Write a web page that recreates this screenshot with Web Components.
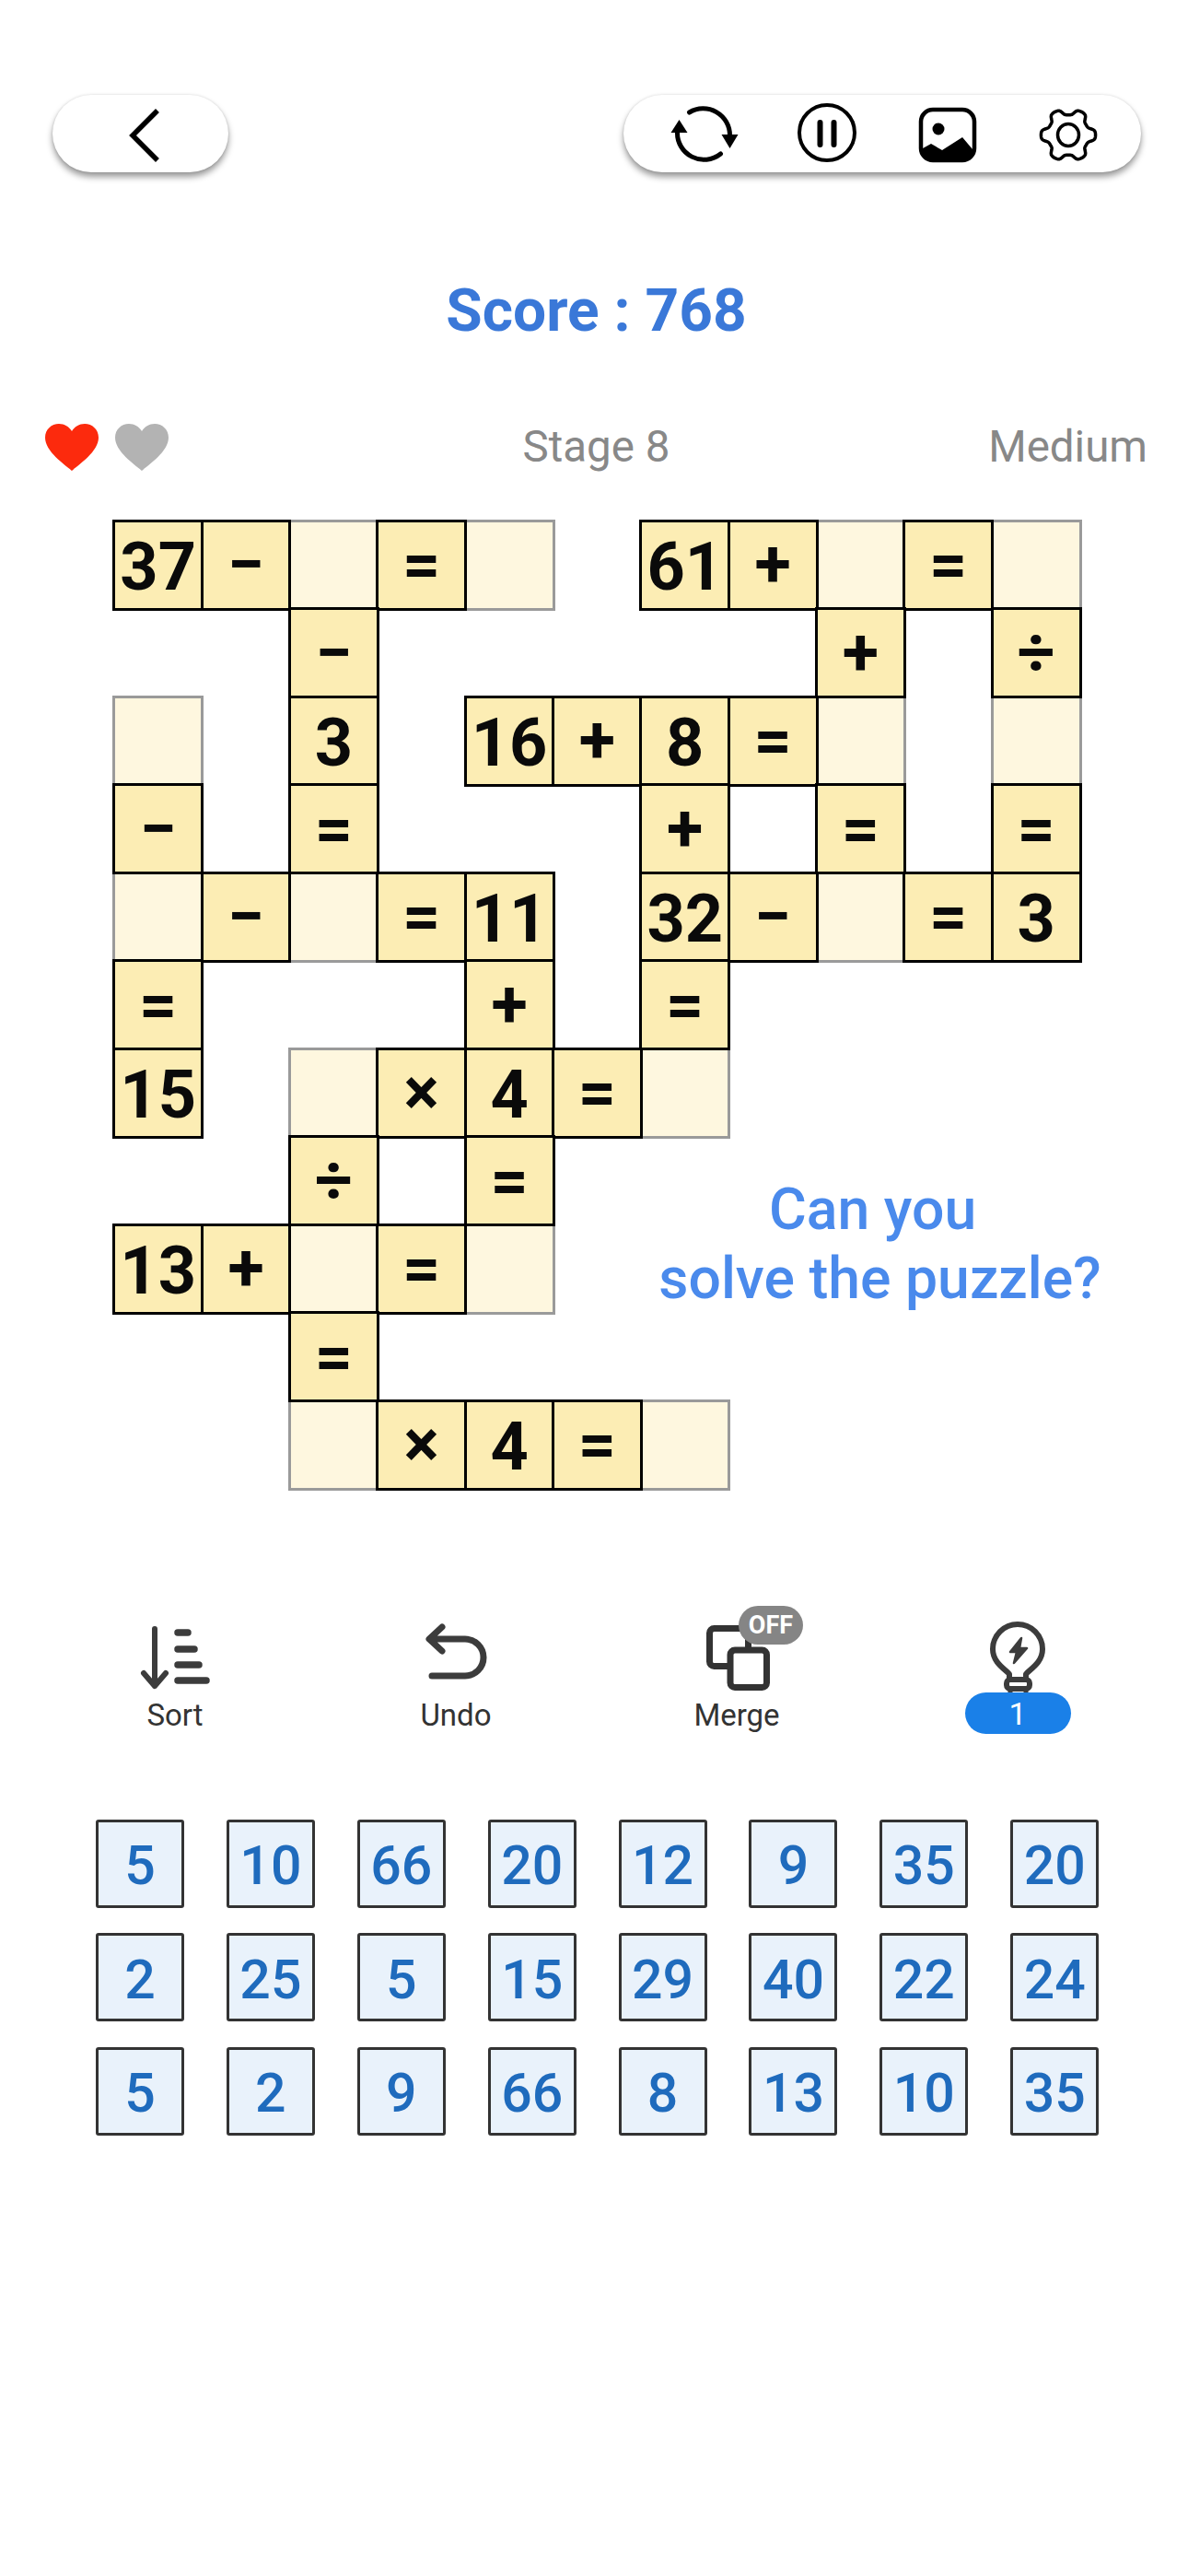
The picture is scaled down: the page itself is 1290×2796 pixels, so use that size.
<!DOCTYPE html>
<html>
<head>
<meta charset="utf-8">
<title>Puzzle</title>
<style>
  html, body { margin: 0; background: #fff; }
  body { width: 1290px; height: 2796px; overflow: hidden; font-family: Roboto, "Liberation Sans", sans-serif; }
</style>
</head>
<body>
<game-screen>
  <top-bar></top-bar>
  <score-title>Score : 768</score-title>
  <status-row stage="Stage 8" level="Medium"></status-row>
  <puzzle-board>Can you&nbsp;<br>solve the puzzle?</puzzle-board>
  <tool-bar>
    <tool-button icon="sort"><span slot="label">Sort</span></tool-button>
    <tool-button icon="undo"><span slot="label">Undo</span></tool-button>
    <tool-button icon="merge"><off-badge slot="badge">OFF</off-badge><span slot="label">Merge</span></tool-button>
    <tool-button icon="hint"><count-pill slot="label">1</count-pill></tool-button>
  </tool-bar>
  <tile-tray values="5 10 66 20 12 9 35 20 2 25 5 15 29 40 22 24 5 2 9 66 8 13 10 35"></tile-tray>
</game-screen>

<script>
// gear outline, six soft lobes, notch at 12 o'clock
function gearPath(cx, cy) {
    const pts = [];
    for (let i = 0; i < 144; i++) {
        const a = i / 144 * Math.PI * 2;
        const wave = Math.tanh(Math.cos(6 * a) * 1.8) / Math.tanh(1.8);
        const r = 26 + 3.6 * wave;
        pts.push((cx + Math.cos(a) * r).toFixed(1) + " " + (cy + Math.sin(a) * r * 0.97).toFixed(1));
    }
    return "M" + pts.join("L") + "Z";
}

const TOOL_ICONS = {
    sort: `<svg viewBox="135 1758 110 80" fill="none" stroke="#3c3c3c" stroke-linecap="round" stroke-linejoin="round">
        <path d="M168 1768V1830M156 1816L168 1830L180 1816" stroke-width="6"/>
        <path d="M193 1772H204M193 1790H211M193 1807H216M193 1824H224" stroke-width="7.5"/>
    </svg>`,
    undo: `<svg viewBox="440 1758 110 80" fill="none" stroke="#3c3c3c" stroke-width="7" stroke-linecap="round" stroke-linejoin="round">
        <path d="M480 1766L466 1779L480 1792M467 1779H505A20 20 0 0 1 505 1819H469"/>
    </svg>`,
    merge: `<svg viewBox="745 1758 110 80" fill="none" stroke="#333" stroke-width="7" stroke-linejoin="round">
        <rect x="770.500" y="1767.500" width="42" height="41" rx="5"/>
        <rect x="793" y="1791" width="39.500" height="40.500" rx="5" fill="#fff"/>
    </svg>`,
    hint: `<svg viewBox="1050 1758 110 80" fill="none" stroke="#3c3c3c" stroke-width="6" stroke-linejoin="round">
        <path d="M1096 1823V1817C1092 1812 1078 1805 1078 1790A27 27 0 0 1 1132 1790C1132 1805 1118 1812 1114 1817V1823"/>
        <rect x="1093" y="1823" width="25" height="10" rx="4"/>
        <path d="M1097 1833V1840M1114 1833V1840" stroke-width="5"/>
        <path d="M1109 1778L1097 1793H1104L1101 1805L1115 1789H1107Z" fill="#3c3c3c" stroke-width="2.500"/>
    </svg>`
};

class GameScreen extends HTMLElement {
    constructor() {
        super();
        this.attachShadow({ mode: "open" });
        this.shadowRoot.innerHTML = `
            <style>
                :host { display: block; width: 1290px; color: #000; font-family: Roboto, "Liberation Sans", sans-serif; }
            </style>
            <slot></slot>
        `;
    }
}

class TopBar extends HTMLElement {
    constructor() {
        super();
        this.attachShadow({ mode: "open" });
        this.shadowRoot.innerHTML = `
            <style>
                :host { display: flex; justify-content: space-between; padding: 103px 51px 0 57px; }
                .pill {
                    height: 84px; border-radius: 42px; background: #fff;
                    box-shadow: 0 5px 7px rgba(0,0,0,.4), 0 0 3px rgba(0,0,0,.12);
                    display: flex;
                }
                .back { width: 191px; }
                .actions { width: 562px; padding-left: 24px; box-sizing: border-box; }
                svg { display: block; height: 84px; }
            </style>
            <div class="pill back">
                <svg width="191" viewBox="57 103 191 84" fill="none" stroke="#000" stroke-width="5.500" stroke-linecap="square">
                    <path d="M169 122L144 147L169 172"/>
                </svg>
            </div>
            <div class="pill actions">
                <svg width="131" viewBox="701.500 103 131 84" fill="none" stroke="#000" stroke-width="5" stroke-linecap="round">
                    <path d="M749 122A29 29 0 0 1 793 147"/>
                    <path d="M783 167A29 29 0 0 1 736 143"/>
                    <path d="M784 146H802L793 161Z" fill="#000" stroke="none"/>
                    <path d="M729 144H747L738 130Z" fill="#000" stroke="none"/>
                </svg>
                <svg width="131" viewBox="832 103 131 84" fill="none" stroke="#000" stroke-width="4">
                    <circle cx="898" cy="144" r="30"/>
                    <path d="M890.500 133V157M905.500 133V157" stroke-width="6" stroke-linecap="round"/>
                </svg>
                <svg width="131" viewBox="963 103 131 84" fill="none" stroke="#000" stroke-width="4.500">
                    <path d="M1002 161L1011 156L1023 163L1045 149L1056 162V166A9 9 0 0 1 1047 173H1011A9 9 0 0 1 1002 166Z" fill="#000" stroke="none"/>
                    <rect x="1000" y="119" width="58" height="55" rx="13"/>
                    <ellipse cx="1019" cy="140" rx="6.500" ry="6.500" fill="#000" stroke="none"/>
                </svg>
                <svg width="131" viewBox="1094 103 131 84" fill="none" stroke="#000" stroke-width="3.500">
                    <path d="${gearPath(1160, 146.5)}"/>
                    <ellipse cx="1160" cy="146.500" rx="11.500" ry="12"/>
                </svg>
            </div>
        `;
    }
}

class ScoreTitle extends HTMLElement {
    constructor() {
        super();
        this.attachShadow({ mode: "open" });
        this.shadowRoot.innerHTML = `
            <style>
                :host { display: block; margin-top: 111px; padding-left: 5px; text-align: center; font: 700 64px/80px Roboto, sans-serif; color: #3a78d8; }
            </style>
            <slot></slot>
        `;
    }
}

class StatusRow extends HTMLElement {
    constructor() {
        super();
        this.attachShadow({ mode: "open" });
        const heart = c => `<svg width="58" height="52" viewBox="0 0 58 52"><path fill="${c}" d="M29 51C24 46 0 31 0 15C0 6 7 0 15 0C21 0 26 3 29 8C32 3 37 0 43 0C51 0 58 6 58 15C58 31 34 46 29 51Z"/></svg>`;
        this.shadowRoot.innerHTML = `
            <style>
                :host { display: grid; grid-template-columns: 1fr auto 1fr; align-items: center; height: 60px; margin-top: 77px; padding: 0 44px 0 49px; font: 400 47.5px/60px Roboto, sans-serif; color: #888; }
                .hearts { display: flex; gap: 18px; padding-top: 2px; }
                svg { display: block; }
                .level { justify-self: end; }
            </style>
            <div class="hearts">${heart("#fc2a0d")}${heart("#b3b3b3")}</div>
            <div>${this.getAttribute("stage")}</div>
            <div class="level">${this.getAttribute("level")}</div>
        `;
    }
}

class BoardCell extends HTMLElement {
    constructor() {
        super();
        this.attachShadow({ mode: "open" });
        this.shadowRoot.innerHTML = `
            <style>
                :host {
                    display: flex; align-items: center; justify-content: center;
                    margin: -1.8px; border: 3.6px solid #000; background: #fcedb4;
                    position: relative; z-index: 1; min-width: 0;
                    padding-top: 5px; box-sizing: border-box;
                    font: 700 72px/1 Roboto, "Liberation Sans", sans-serif; color: #0a0a0a;
                }
                :host([op]) { padding-top: 0; }
                :host([blank]) { border-color: #9a9a9a; background: #fef7df; z-index: 0; }
            </style>
            <slot></slot>
        `;
    }
}

class PuzzleBoard extends HTMLElement {
    constructor() {
        super();
        this.attachShadow({ mode: "open" });
        // one string per row, "_" marks an empty slot for a tile
        const layout = [
            "37-_=_.61+_=_",
            "..-.....+.÷",
            "_.3.16+8=_._",
            "-.=...+.=.=",
            "_-_=11.32-_=3",
            "=...+.=",
            "15._×4=_",
            "..÷.=",
            "13+_=_",
            "..=",
            ".._×4=_"
        ];
        let cells = "";
        layout.forEach((line, r) => {
            const tokens = line.match(/\d+|./g);
            tokens.forEach((t, c) => {
                if (t === ".") return;
                const pos = `style="grid-row:${r + 1};grid-column:${c + 1}"`;
                if (t === "_") cells += `<board-cell blank ${pos}></board-cell>`;
                else if (/\d/.test(t)) cells += `<board-cell ${pos}>${t}</board-cell>`;
                else cells += `<board-cell op ${pos}>${t === "-" ? "−" : t}</board-cell>`;
            });
        });
        this.shadowRoot.innerHTML = `
            <style>
                :host {
                    display: grid;
                    grid-template-columns: repeat(11, 95.35px);
                    grid-template-rows: repeat(11, 95.5px);
                    margin: 50.3px 0 0 124px; width: 1049px;
                }
                .caption {
                    grid-row: 8 / 10; grid-column: 7 / 12; margin-right: -42px; padding-top: 41px;
                    text-align: center; white-space: nowrap;
                    font: 500 62.5px/75px Roboto, sans-serif; color: #4a8aec;
                }
            </style>
            ${cells}
            <div class="caption"><slot></slot></div>
        `;
    }
}

class ToolBar extends HTMLElement {
    constructor() {
        super();
        this.attachShadow({ mode: "open" });
        this.shadowRoot.innerHTML = `
            <style>
                :host { display: grid; grid-template-columns: repeat(4, 305px); margin-top: 142px; padding-left: 37.5px; height: 124px; }
            </style>
            <slot></slot>
        `;
    }
}

class ToolButton extends HTMLElement {
    constructor() {
        super();
        this.attachShadow({ mode: "open" });
        this.shadowRoot.innerHTML = `
            <style>
                :host { display: flex; flex-direction: column; align-items: center; position: relative; font: 400 33px/48px Roboto, sans-serif; color: #333; }
                svg { display: block; width: 110px; height: 80px; overflow: visible; }
            </style>
            ${TOOL_ICONS[this.getAttribute("icon")]}
            <slot name="badge"></slot>
            <slot name="label"></slot>
        `;
    }
}

class OffBadge extends HTMLElement {
    constructor() {
        super();
        this.attachShadow({ mode: "open" });
        this.shadowRoot.innerHTML = `
            <style>
                :host {
                    position: absolute; left: 154.5px; top: -15px; width: 70px; height: 42px; border-radius: 21px;
                    background: #858585; color: #fff; text-align: center;
                    font: 700 27px/42px Roboto, sans-serif;
                }
            </style>
            <slot></slot>
        `;
    }
}

class CountPill extends HTMLElement {
    constructor() {
        super();
        this.attachShadow({ mode: "open" });
        this.shadowRoot.innerHTML = `
            <style>
                :host {
                    display: block; width: 115px; height: 45px; margin-top: -1px; border-radius: 23px;
                    background: #1a80e8; color: #fff; text-align: center; position: relative;
                    font: 400 34px/46px Roboto, sans-serif;
                }
            </style>
            <slot></slot>
        `;
    }
}

class NumberTile extends HTMLElement {
    constructor() {
        super();
        this.attachShadow({ mode: "open" });
        this.shadowRoot.innerHTML = `
            <style>
                :host {
                    display: flex; align-items: center; justify-content: center;
                    box-sizing: border-box; width: 96px; height: 96px; padding-top: 4px;
                    border: 3px solid #333; border-radius: 3px; background: #e9f2fb;
                    font: 500 59px/1 Roboto, sans-serif; color: #1f6bbd;
                }
            </style>
            <slot></slot>
        `;
    }
}

class TileTray extends HTMLElement {
    constructor() {
        super();
        this.attachShadow({ mode: "open" });
        const tiles = this.getAttribute("values").split(" ").map(v => `<number-tile>${v}</number-tile>`).join("");
        this.shadowRoot.innerHTML = `
            <style>
                :host { display: grid; grid-template-columns: repeat(8, 96px); gap: 27.5px 45.9px; margin: 93px 0 0 104px; }
            </style>
            ${tiles}
        `;
    }
}

customElements.define("game-screen", GameScreen);
customElements.define("top-bar", TopBar);
customElements.define("score-title", ScoreTitle);
customElements.define("status-row", StatusRow);
customElements.define("board-cell", BoardCell);
customElements.define("puzzle-board", PuzzleBoard);
customElements.define("tool-bar", ToolBar);
customElements.define("tool-button", ToolButton);
customElements.define("off-badge", OffBadge);
customElements.define("count-pill", CountPill);
customElements.define("number-tile", NumberTile);
customElements.define("tile-tray", TileTray);
</script>
</body>
</html>
